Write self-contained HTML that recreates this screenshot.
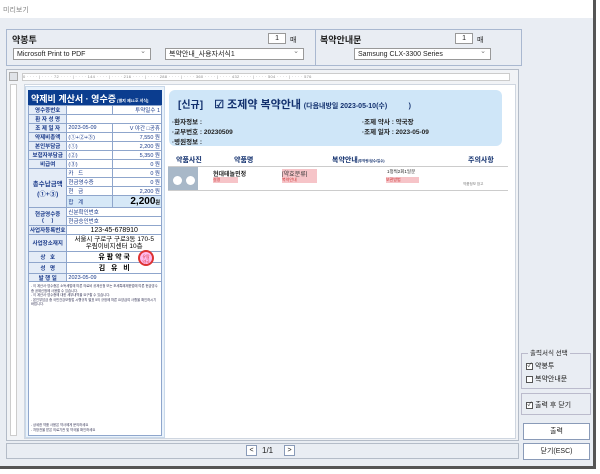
<!DOCTYPE html>
<html><head><meta charset="utf-8"><style>
*{margin:0;padding:0;box-sizing:border-box}
body{width:600px;height:474px;background:#fff;font-family:"Liberation Sans","Noto Sans CJK KR",sans-serif;position:relative;overflow:hidden;color:#222}
.a{position:absolute}
.win{left:0;top:0;width:596px;height:469px;background:#e9edf3;border-right:3px solid #555;border-bottom:3px solid #555}
.tb{left:0;top:0;width:593px;height:18px;background:#fff;font-size:7px;color:#888;padding:5px 3px}
.grp{border:1px solid #a9b8d0;background:#e9edf3}
.sel{background:#fff;border:1px solid #999;font-size:7px;height:12px;padding:2px 3px;line-height:7px;white-space:nowrap}
.sel:after{content:"⌄";position:absolute;right:4px;top:-1px;color:#777;font-size:7px}
.spin{background:#fff;border:1px solid #999;width:18px;height:11px;font-size:7px;text-align:right;padding-right:6px;line-height:9px}
.h{font-size:9px;font-weight:bold;color:#222}
table{border-collapse:collapse;font-size:5.5px;color:#1a3a8a}
td{border:1px solid #8fa6cc;height:9px;padding:0 1px;white-space:nowrap;overflow:hidden}
.lb{background:#e4ecf7;font-weight:bold;text-align:center;width:32px}
.r{text-align:right}
.btn{background:#fff;border:1px solid #8a9bb8;font-size:7px;text-align:center;line-height:15px}
.cb{display:inline-block;width:7px;height:7px;border:1px solid #555;background:#fff;vertical-align:middle;margin-right:2px;font-size:6px;line-height:5px;text-align:center}
</style></head><body>
<div class="a win"></div>
<div class="a tb">미리보기</div>

<div class="a grp" style="left:6px;top:29px;width:310px;height:37px"></div>
<div class="a h" style="left:12px;top:33px">약봉투</div>
<div class="a spin" style="left:268px;top:33px">1</div>
<div class="a" style="left:290px;top:35px;font-size:7px">매</div>
<div class="a sel" style="left:13px;top:48px;width:138px">Microsoft Print to PDF</div>
<div class="a sel" style="left:165px;top:48px;width:139px">복약안내_사용자서식1</div>
<div class="a grp" style="left:315px;top:29px;width:207px;height:37px"></div>
<div class="a h" style="left:320px;top:33px">복약안내문</div>
<div class="a spin" style="left:455px;top:33px">1</div>
<div class="a" style="left:477px;top:35px;font-size:7px">매</div>
<div class="a sel" style="left:354px;top:48px;width:137px">Samsung CLX-3300 Series</div>

<!-- preview -->
<div class="a" style="left:6px;top:69px;width:513px;height:372px;background:#f1f3f6;border:1px solid #b4bcc8"></div>
<div class="a" style="left:9px;top:72px;width:9px;height:9px;border:1px solid #aaa;background:#e0e3e8"></div>
<div class="a" style="left:22px;top:73px;width:488px;height:8px;background:#fff;border:1px solid #ccc;font-size:4px;color:#888;white-space:nowrap;overflow:hidden;letter-spacing:.3px;line-height:6px">0 · · · · | · · · · 72 · · · · | · · · · 144 · · · · | · · · · 216 · · · · | · · · · 288 · · · · | · · · · 360 · · · · | · · · · 432 · · · · | · · · · 504 · · · · | · · · · 576</div>
<div class="a" style="left:10px;top:84px;width:7px;height:352px;background:#fff;border:1px solid #ccc"></div>
<div class="a" style="left:24px;top:84px;width:492px;height:355px;background:#fff;border:1px solid #cfd6e0"></div>

<!-- receipt -->
<div class="a" style="left:25px;top:86px;width:140px;height:352px;background:#e9f2fb;border:1px solid #c8d8ea"></div>
<div class="a" style="left:28px;top:90px;width:134px;height:15px;background:#0b3d8f;color:#fff;font-size:9px;font-weight:bold;padding:2px 3px;white-space:nowrap">약제비 계산서 · 영수증<span style="font-size:4px"> [별지 제11호 서식]</span></div>
<table class="a" style="left:28px;top:105px;width:134px;background:#fff">
<tr><td class="lb">영수증번호</td><td colspan="2"></td><td class="r" colspan="2">투약일수 1</td></tr>
<tr><td class="lb">환 자 성 명</td><td colspan="4"></td></tr>
<tr><td class="lb">조 제 일 자</td><td colspan="2">2023-05-09</td><td colspan="2" class="r">V 야간 □공휴</td></tr>
<tr><td class="lb">약제비총액</td><td colspan="2">(①+②+③)</td><td colspan="2" class="r">7,550 원</td></tr>
<tr><td class="lb">본인부담금</td><td colspan="2">(①)</td><td colspan="2" class="r">2,200 원</td></tr>
<tr><td class="lb">보험자부담금</td><td colspan="2">(②)</td><td colspan="2" class="r">5,350 원</td></tr>
<tr><td class="lb">비급여</td><td colspan="2">(③)</td><td colspan="2" class="r">0 원</td></tr>
<tr><td class="lb" rowspan="4" style="font-size:6.5px">총수납금액<br>(①+③)</td><td colspan="2">카 &nbsp; 드</td><td colspan="2" class="r">0 원</td></tr>
<tr><td colspan="2">현금영수증</td><td colspan="2" class="r">0 원</td></tr>
<tr><td colspan="2">현 &nbsp; 금</td><td colspan="2" class="r">2,200 원</td></tr>
<tr style="background:#d6e8f7"><td colspan="2" style="height:11px">합 &nbsp; 계</td><td colspan="2" class="r" style="font-size:10px;font-weight:bold;color:#000">2,200<span style="font-size:5px">원</span></td></tr>
<tr><td class="lb" rowspan="2">현금영수증<br>(&nbsp;&nbsp;&nbsp;&nbsp;&nbsp;)</td><td colspan="4">신분확인번호</td></tr>
<tr><td colspan="4">현금승인번호</td></tr>
<tr><td class="lb">사업자등록번호</td><td colspan="4" style="font-size:7px;color:#000;text-align:center">123-45-678910</td></tr>
<tr><td class="lb" style="height:17px">사업장소재지</td><td colspan="4" style="font-size:6.5px;color:#000;text-align:center;line-height:7px">서울시 구로구 구로3동 170-5<br>우림이비지센터 10층</td></tr>
<tr><td class="lb">상 &nbsp; 호</td><td colspan="4" style="font-size:7px;color:#000;font-weight:bold;text-align:center">유 팜 약 국</td></tr>
<tr><td class="lb">성 &nbsp; 명</td><td colspan="4" style="font-size:7px;color:#000;font-weight:bold;text-align:center">김 &nbsp; 유 &nbsp; 비</td></tr>
<tr><td class="lb">발 행 일</td><td colspan="4">2023-05-09</td></tr>
</table>
<div class="a" style="left:138px;top:250px;width:16px;height:16px;border-radius:50%;border:2px solid #d33;background:#fbe;color:#d33;font-size:4px;text-align:center;line-height:5px;padding-top:2px">유팜<br>약국</div>
<div class="a" style="left:28px;top:281px;width:134px;height:155px;background:#fff;border:1px solid #8fa6cc;font-size:3.3px;color:#335;padding:2px;line-height:4.5px">- 이 계산서·영수증은 소득세법에 따른 의료비 공제신청 또는 조세특례제한법에 따른 현금영수증 공제신청에 사용할 수 있습니다.<br>- 이 계산서·영수증에 대한 세부내역을 요구할 수 있습니다.<br>- 본인부담금 중 국민건강보험법 시행규칙 별표 5의 규정에 따른 요양급여 사항을 확인하시기 바랍니다.<div style="position:absolute;bottom:3px;left:2px">- 상세한 약품 사용은 약사에게 문의하세요<br>- 처방전을 받은 의료기관 및 약국을 확인하세요</div></div>

<!-- guidance -->
<div class="a" style="left:169px;top:90px;width:333px;height:56px;background:#cfe6f8;border-radius:6px"></div>
<div class="a" style="left:178px;top:96px;font-size:10px;font-weight:bold;color:#12306e;white-space:nowrap">[신규] &nbsp;&nbsp;&nbsp;<span style="font-size:11px">☑ 조제약 복약안내</span> <span style="font-size:7px">(다음내방일 2023-05-10(수) &nbsp;&nbsp;&nbsp;&nbsp;&nbsp;&nbsp;&nbsp;&nbsp;&nbsp;&nbsp;)</span></div>
<div class="a" style="left:172px;top:118px;font-size:6.5px;font-weight:bold;color:#222;line-height:10px">·환자정보 :<br>·교부번호 : 20230509<br>·병원정보 :</div>
<div class="a" style="left:362px;top:118px;font-size:6.5px;font-weight:bold;color:#222;line-height:10px">·조제 약사 : 약국장<br>·조제 일자 : 2023-05-09</div>
<div class="a" style="left:168px;top:155px;width:340px;height:10px;font-size:7px;font-weight:bold;color:#12306e;white-space:nowrap">
<span class="a" style="left:8px">약품사진</span><span class="a" style="left:66px">약품명</span><span class="a" style="left:164px">복약안내<span style="font-size:3.5px">(투약량/횟수/일수)</span></span><span class="a" style="left:300px">주의사항</span></div>
<div class="a" style="left:168px;top:166px;width:340px;height:25px;border-top:1px solid #ccc;border-bottom:1px solid #ccc"></div>
<div class="a" style="left:168px;top:167px;width:30px;height:23px;background:#a8b8c8"></div>
<div class="a" style="left:173px;top:176px;width:9px;height:9px;border-radius:50%;background:#fff"></div>
<div class="a" style="left:186px;top:176px;width:9px;height:9px;border-radius:50%;background:#fff"></div>
<div class="a" style="left:213px;top:169px;font-size:6px;font-weight:bold">현대테놀민정</div>
<div class="a" style="left:213px;top:177px;width:25px;height:6px;background:#f6c4c8;font-size:4px;color:#c33">설명</div>
<div class="a" style="left:282px;top:169px;width:35px;height:8px;background:#f6c4c8;font-size:6px;color:#333">[약효분류]</div>
<div class="a" style="left:282px;top:177px;width:35px;height:6px;background:#f6c4c8;font-size:4px;color:#c33">복약안내</div>
<div class="a" style="left:387px;top:169px;font-size:4.5px">1정씩2회1일분</div>
<div class="a" style="left:386px;top:177px;width:33px;height:6px;background:#f6c4c8;font-size:4px;color:#c33">보관방법</div>
<div class="a" style="left:463px;top:182px;font-size:3.5px;color:#777">약품정보 참고</div>

<!-- nav -->
<div class="a" style="left:6px;top:443px;width:513px;height:16px;border:1px solid #b4bcc8;background:#e9edf3"></div>
<div class="a btn" style="left:246px;top:445px;width:11px;height:11px;line-height:10px">&lt;</div>
<div class="a" style="left:262px;top:446px;font-size:8px">1/1</div>
<div class="a btn" style="left:284px;top:445px;width:11px;height:11px;line-height:10px">&gt;</div>

<!-- right panel -->
<div class="a" style="left:521px;top:353px;width:70px;height:36px;border:1px solid #bbc"></div>
<div class="a" style="left:528px;top:347px;font-size:6.5px;background:#e9edf3;padding:0 2px">출력서식 선택</div>
<div class="a" style="left:526px;top:361px;font-size:7px"><span class="cb">✓</span>약봉투</div>
<div class="a" style="left:526px;top:374px;font-size:7px"><span class="cb"></span>복약안내문</div>
<div class="a" style="left:521px;top:393px;width:70px;height:22px;border:1px solid #bbc"></div>
<div class="a" style="left:526px;top:400px;font-size:7px"><span class="cb">✓</span>출력 후 닫기</div>
<div class="a btn" style="left:523px;top:423px;width:67px;height:17px">출력</div>
<div class="a btn" style="left:523px;top:443px;width:67px;height:17px">닫기(ESC)</div>
</body></html>
